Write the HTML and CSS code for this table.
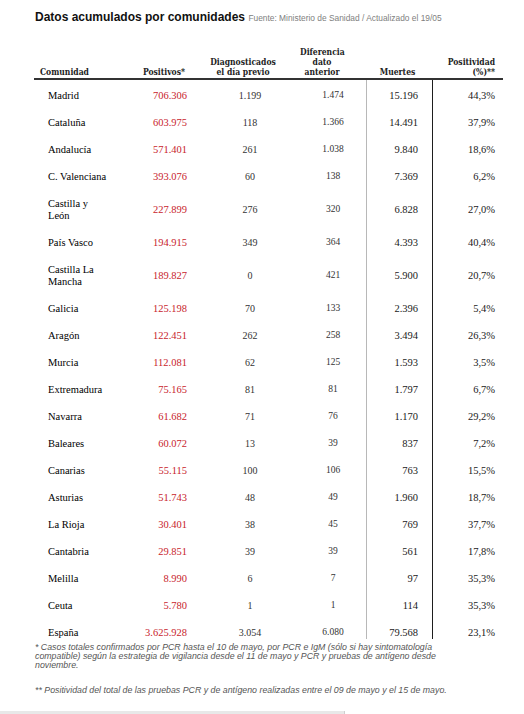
FILE: index.html
```html
<!DOCTYPE html>
<html lang="es">
<head>
<meta charset="utf-8">
<title>Datos acumulados por comunidades</title>
<link rel="stylesheet" href="styles.css">
</head>
<body>
<div class="page">
  <h1 class="title">Datos acumulados por comunidades <span class="source">Fuente: Ministerio de Sanidad / Actualizado el 19/05</span></h1>
  <table class="data">
    <colgroup>
      <col class="c-name"><col class="c-pos"><col class="c-diag"><col class="c-diff"><col class="c-dead"><col class="c-rate">
    </colgroup>
    <thead>
      <tr>
        <th class="h-name">Comunidad</th>
        <th class="h-pos">Positivos*</th>
        <th class="h-diag">Diagnosticados<br>el día previo</th>
        <th class="h-diff">Diferencia<br>dato<br>anterior</th>
        <th class="h-dead">Muertes</th>
        <th class="h-rate">Positividad<br>(%)**</th>
      </tr>
    </thead>
    <tbody>
      <tr><td class="name">Madrid</td><td class="pos">706.306</td><td class="diag">1.199</td><td class="diff">1.474</td><td class="dead">15.196</td><td class="rate">44,3%</td></tr>
      <tr><td class="name">Cataluña</td><td class="pos">603.975</td><td class="diag">118</td><td class="diff">1.366</td><td class="dead">14.491</td><td class="rate">37,9%</td></tr>
      <tr><td class="name">Andalucía</td><td class="pos">571.401</td><td class="diag">261</td><td class="diff">1.038</td><td class="dead">9.840</td><td class="rate">18,6%</td></tr>
      <tr><td class="name">C. Valenciana</td><td class="pos">393.076</td><td class="diag">60</td><td class="diff">138</td><td class="dead">7.369</td><td class="rate">6,2%</td></tr>
      <tr><td class="name">Castilla y León</td><td class="pos">227.899</td><td class="diag">276</td><td class="diff">320</td><td class="dead">6.828</td><td class="rate">27,0%</td></tr>
      <tr><td class="name">País Vasco</td><td class="pos">194.915</td><td class="diag">349</td><td class="diff">364</td><td class="dead">4.393</td><td class="rate">40,4%</td></tr>
      <tr><td class="name">Castilla La Mancha</td><td class="pos">189.827</td><td class="diag">0</td><td class="diff">421</td><td class="dead">5.900</td><td class="rate">20,7%</td></tr>
      <tr><td class="name">Galicia</td><td class="pos">125.198</td><td class="diag">70</td><td class="diff">133</td><td class="dead">2.396</td><td class="rate">5,4%</td></tr>
      <tr><td class="name">Aragón</td><td class="pos">122.451</td><td class="diag">262</td><td class="diff">258</td><td class="dead">3.494</td><td class="rate">26,3%</td></tr>
      <tr><td class="name">Murcia</td><td class="pos">112.081</td><td class="diag">62</td><td class="diff">125</td><td class="dead">1.593</td><td class="rate">3,5%</td></tr>
      <tr><td class="name">Extremadura</td><td class="pos">75.165</td><td class="diag">81</td><td class="diff">81</td><td class="dead">1.797</td><td class="rate">6,7%</td></tr>
      <tr><td class="name">Navarra</td><td class="pos">61.682</td><td class="diag">71</td><td class="diff">76</td><td class="dead">1.170</td><td class="rate">29,2%</td></tr>
      <tr><td class="name">Baleares</td><td class="pos">60.072</td><td class="diag">13</td><td class="diff">39</td><td class="dead">837</td><td class="rate">7,2%</td></tr>
      <tr><td class="name">Canarias</td><td class="pos">55.115</td><td class="diag">100</td><td class="diff">106</td><td class="dead">763</td><td class="rate">15,5%</td></tr>
      <tr><td class="name">Asturias</td><td class="pos">51.743</td><td class="diag">48</td><td class="diff">49</td><td class="dead">1.960</td><td class="rate">18,7%</td></tr>
      <tr><td class="name">La Rioja</td><td class="pos">30.401</td><td class="diag">38</td><td class="diff">45</td><td class="dead">769</td><td class="rate">37,7%</td></tr>
      <tr><td class="name">Cantabria</td><td class="pos">29.851</td><td class="diag">39</td><td class="diff">39</td><td class="dead">561</td><td class="rate">17,8%</td></tr>
      <tr><td class="name">Melilla</td><td class="pos">8.990</td><td class="diag">6</td><td class="diff">7</td><td class="dead">97</td><td class="rate">35,3%</td></tr>
      <tr><td class="name">Ceuta</td><td class="pos">5.780</td><td class="diag">1</td><td class="diff">1</td><td class="dead">114</td><td class="rate">35,3%</td></tr>
      <tr class="total"><td class="name">España</td><td class="pos">3.625.928</td><td class="diag">3.054</td><td class="diff">6.080</td><td class="dead">79.568</td><td class="rate">23,1%</td></tr>
    </tbody>
  </table>
  <div class="notes">
    <p class="note">* Casos totales confirmados por PCR hasta el 10 de mayo, por PCR e IgM (sólo si hay sintomatología compatible) según la estrategia de vigilancia desde el 11 de mayo y PCR y pruebas de antígeno desde noviembre.</p>
    <p class="note">** Positividad del total de las pruebas PCR y de antígeno realizadas entre el 09 de mayo y el 15 de mayo.</p>
  </div>
</div>
<div class="scrollbar"></div>
</body>
</html>
```

FILE: styles.css
```css
html, body {
  margin: 0;
  padding: 0;
  background: #fff;
}

.page {
  padding: 10px 0 0 34px;
}

.title {
  margin: 0 0 22px 1px;
  font-family: "Liberation Sans", Arial, sans-serif;
  font-size: 12px;
  line-height: 14px;
  font-weight: bold;
  color: #111;
}

.source {
  font-size: 8.4px;
  font-weight: normal;
  color: #808080;
}

.data {
  border-collapse: separate;
  border-spacing: 0;
  table-layout: fixed;
  width: 469px;
}

.c-name { width: 86px; }
.c-pos { width: 80px; }
.c-diag { width: 100px; }
.c-diff { width: 66px; }
.c-dead { width: 67px; }
.c-rate { width: 70px; }

.data th {
  font-family: "DejaVu Serif", "Liberation Serif", serif;
  font-stretch: condensed;
  font-weight: bold;
  font-size: 8.5px;
  line-height: 10px;
  color: #222;
  vertical-align: bottom;
  padding: 0 0 1px 0;
  border-bottom: 2px solid #333;
}

.data th.h-name { text-align: left; padding-left: 6px; }
.data th.h-pos { text-align: right; padding-right: 15px; }
.data th.h-diag { text-align: center; padding-right: 14px; }
.data th.h-diff { text-align: center; padding-right: 22px; }
.data th.h-dead { text-align: center; padding-right: 4px; }
.data th.h-rate { text-align: right; padding-right: 8px; }

.data td {
  font-family: "Liberation Serif", "Times New Roman", serif;
  font-size: 10.5px;
  line-height: 11px;
  padding: 8px 0;
  vertical-align: middle;
  color: #1a1a1a;
}

.data tbody tr:first-child td {
  padding-top: 10px;
}

.data td.name {
  padding: 7.5px 10px 7.5px 14px;
  line-height: 12px;
  color: #000;
}

.data tbody tr:first-child td.name {
  padding-top: 9.5px;
}

.data td.pos {
  text-align: right;
  padding-right: 13px;
  color: #c8232c;
}

.data td.diag {
  text-align: center;
  font-size: 10px;
  color: #333;
}

.data td.diff {
  text-align: center;
  font-size: 9.5px;
  color: #333;
}

.data td.dead {
  text-align: right;
  padding-right: 14px;
  border-left: 1px solid #b8b8b8;
  border-right: 1px solid #1e1e1e;
}

.data td.rate {
  text-align: right;
  padding-right: 8px;
}

.data tr.total td {
  padding-bottom: 0;
}

.notes {
  width: 440px;
  margin: 4px 0 0 1px;
}

.note {
  margin: 0 0 16px 0;
  font-family: "Liberation Sans", Arial, sans-serif;
  font-style: italic;
  font-size: 8.8px;
  line-height: 9px;
  color: #555;
}

.note:last-child {
  margin-bottom: 0;
}

.scrollbar {
  margin-top: 16px;
  width: 344px;
  height: 10px;
  background: #e8e8e8;
  border-right: 1px solid #cfcfcf;
}
```
